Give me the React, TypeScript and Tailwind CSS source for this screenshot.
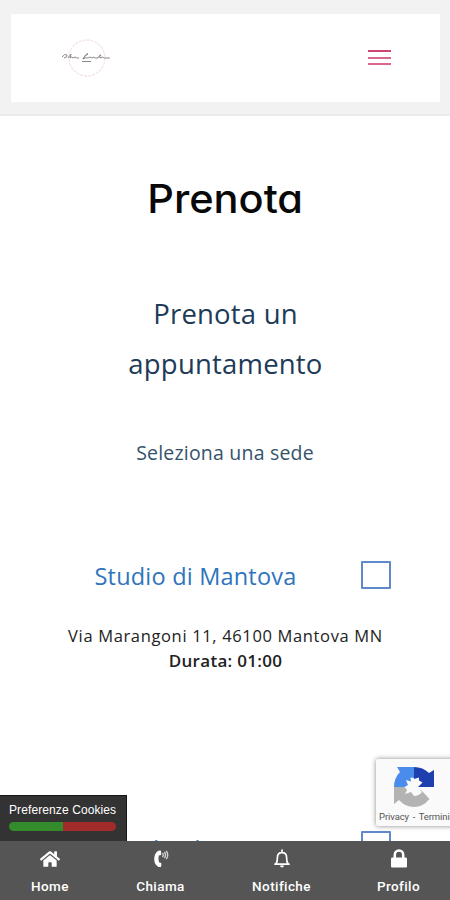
import React from "react";

function Logo() {
  return (
    <svg width="54" height="42" viewBox="0 0 54 42" aria-label="Logo">
      <circle cx="27" cy="21" r="18" fill="none" stroke="#f5e4e5" strokeWidth="1.3" strokeDasharray="3 1" />
      <path d="M2 20q3-4 5-2q1 2-3 3M8 21l3-4-1 4q2-2 3 0 2-2 4 0h2M23 22q4-7 5-5-4 2-5 5 3-2 5-1 2-2 4 0 2-2 3 0h3q2-4 3-3-2 2-1 3 3-2 4 0h6M22 24.5h9" fill="none" stroke="#8d898b" strokeWidth="1" />
    </svg>
  );
}

function Recaptcha() {
  return (
    <svg width="42" height="42" viewBox="0 0 42 42" aria-label="reCAPTCHA">
      <path d="M21 1V12L17.500 11.500 18 15.500 13 14 15 19 11.500 21H1Q1 12 7 6L4 1Z" fill="#4a8cec" />
      <path d="M21 1Q30 1 36 7L41 4V21H25L29.500 16.500 26 14.500 26 11.500 21 13Z" fill="#1e3fae" />
      <path d="M1 21H11.500L14 24 12 28 18 26 21 30Q26 30 29 26L26 23L29 25L36.500 33Q30 41 21 41Q12 41 6 34L1 38Z" fill="#b3b3b3" />
    </svg>
  );
}

function HomeIcon() {
  return (
    <svg width="20" height="18" viewBox="0 0 576 512" fill="#fff">
      <path d="M280.4 148.3 96 300.1V464a16 16 0 0 0 16 16l112-.3a16 16 0 0 0 16-16V368a16 16 0 0 1 16-16h64a16 16 0 0 1 16 16v95.6a16 16 0 0 0 16 16.1L464 480a16 16 0 0 0 16-16V300L295.7 148.3a12.2 12.2 0 0 0-15.3 0zM571.6 251.5 488 182.6V44a12 12 0 0 0-12-12h-56a12 12 0 0 0-12 12v72.6L318.5 43a48 48 0 0 0-61 0L4.3 251.5a12 12 0 0 0-1.6 16.9l25.5 31a12 12 0 0 0 16.9 1.6L280.4 107.2a12.2 12.2 0 0 1 15.3 0L530.9 301a12 12 0 0 0 16.9-1.6l25.5-31a12 12 0 0 0-1.7-16.9z" />
    </svg>
  );
}

function CallIcon() {
  return (
    <svg width="16" height="18" viewBox="0 0 16 18">
      <path d="M5.2.8 7.8.6Q8.400 3 8 5L5.800 5.600Q5 9 6 12.300L8.200 13Q8.600 15 8 17L5.500 17Q1.200 14.500 1.200 9T5.200.8Z" fill="#fff" />
      <path d="M9.500 3q1.400 2 0 4M11.400 1.800q2.200 3.200 0 6.400M13.300.8q2.800 4.200 0 8.400" fill="none" stroke="#d0d0d0" strokeWidth="1.4" />
    </svg>
  );
}

function BellIcon() {
  return (
    <svg width="18" height="20" viewBox="0 0 18 20">
      <path d="M9 1V3M2 15.200H16M3 14.800Q4.400 13 4.400 8.500Q4.400 3.600 9 3.600T13.600 8.500Q13.600 13 15 14.800" fill="none" stroke="#fff" strokeWidth="1.7" strokeLinecap="round" />
      <path d="M7 16.500H11Q10.800 18.600 9 18.600T7 16.500Z" fill="#fff" />
    </svg>
  );
}

function LockIcon() {
  return (
    <svg width="18" height="20" viewBox="0 0 18 20">
      <path d="M4.800 9V5.700a4.200 4.200 0 0 1 8.400 0V9" fill="none" stroke="#fff" strokeWidth="2.5" />
      <rect x="1" y="8.500" width="16" height="10" rx="1.2" fill="#fff" />
    </svg>
  );
}

function NavItem({ icon, label, className }: { icon: React.ReactNode; label: string; className: string }) {
  return (
    <div className={"flex shrink-0 flex-col items-center " + className}>
      <div className="flex h-5 items-center">{icon}</div>
      <span className="mt-2 whitespace-nowrap font-['Roboto',sans-serif] text-[13.5px] font-medium leading-[19px] tracking-[0.4px] text-white">{label}</span>
    </div>
  );
}

export default function App() {
  return (
    <div className="relative h-[900px] w-[450px] overflow-hidden bg-white font-['Open_Sans',sans-serif]">
      <header className="h-[116px] border-b-2 border-[#ebebeb] bg-[#f2f2f2] pl-[11px] pr-[10px] pt-[14px]">
        <div className="flex h-[88px] items-center justify-between bg-white pl-[49px] pr-[49px]">
          <Logo />
          <div className="mb-[2px] flex w-[23px] flex-col">
            <div className="h-[2px] bg-[#cf4576]" />
            <div className="mt-[5px] h-[2px] bg-[#d8688c]" />
            <div className="mt-1 h-[2px] bg-[#d8688c]" />
          </div>
        </div>
      </header>
      <main className="flex flex-col items-center text-center">
        <h1 className="mt-[53px] scale-x-[1.065] whitespace-nowrap font-['Inter',sans-serif] text-[39px] font-medium leading-[60px] text-[#080808] [font-feature-settings:'cv11']">Prenota</h1>
        <h2 className="mt-[60px] w-[260px] pl-px text-[27.5px] leading-[50px] tracking-[0.2px] text-[#203a58]">Prenota un appuntamento</h2>
        <p className="mt-[49px] text-[19.5px] leading-[30px] tracking-[0.2px] text-[#35526b]">Seleziona una sede</p>
        <section className="mt-[89px] flex w-full flex-col items-center">
          <div className="flex h-10 w-full items-center">
            <h3 className="ml-[30px] w-[331px] text-[23.5px] tracking-[0.2px] text-[#2f74bd]">Studio di Mantova</h3>
            <div className="mb-[4px] h-[28px] w-[30px] rounded-[1px] border-2 border-[#5f89c8]" />
          </div>
          <p className="mt-[26px] whitespace-nowrap pl-px text-[16.5px] leading-[25px] tracking-[0.65px] text-[#222]">Via Marangoni 11, 46100 Mantova MN</p>
          <p className="pl-px text-[17px] font-semibold leading-[25px] tracking-[0.3px] text-[#222]">Durata: 01:00</p>
        </section>
        <section className="mt-[154px] flex h-10 w-full items-center">
          <h3 className="ml-[30px] mt-[6px] w-[331px] text-[23.5px] tracking-[0.2px] text-[#2f74bd]">Studio di Cervia</h3>
          <div className="mb-[4px] h-[28px] w-[30px] rounded-[1px] border-2 border-[#5f89c8]" />
        </section>
      </main>
      <aside className="absolute left-[376px] top-[759px] h-[67px] w-[90px] rounded-[2px] bg-[#fafafa] shadow-[0_0_5px_#888]">
        <div className="ml-[17px] mt-[7px] h-[42px]"><Recaptcha /></div>
        <p className="ml-[3px] w-[71px] whitespace-nowrap font-['Roboto',sans-serif] text-[9.5px] leading-[17px] tracking-[-0.1px] text-[#555] [word-spacing:1.4px]">Privacy - Termini</p>
      </aside>
      <aside className="absolute left-0 top-[795px] h-[46px] w-[127px] border-r border-t border-[#151515] bg-[#333] pl-[9px] pt-[6px]">
        <p className="whitespace-nowrap font-['Liberation_Sans',sans-serif] text-[12px] leading-4 tracking-[0.1px] text-white">Preferenze Cookies</p>
        <div className="mt-1 flex h-[9px] w-[107px] overflow-hidden rounded-full"><div className="w-1/2 bg-[#348b2b]" /><div className="w-1/2 bg-[#a12b2b]" /></div>
      </aside>
      <nav className="absolute left-0 top-[841px] flex h-[59px] w-[450px] bg-[#555] pt-2">
        <NavItem icon={<HomeIcon />} label="Home" className="w-[100px]" />
        <NavItem icon={<CallIcon />} label="Chiama" className="w-[121px]" />
        <NavItem icon={<BellIcon />} label="Notifiche" className="w-[121px]" />
        <NavItem icon={<LockIcon />} label="Profilo" className="-ml-px w-[115px]" />
      </nav>
    </div>
  );
}
